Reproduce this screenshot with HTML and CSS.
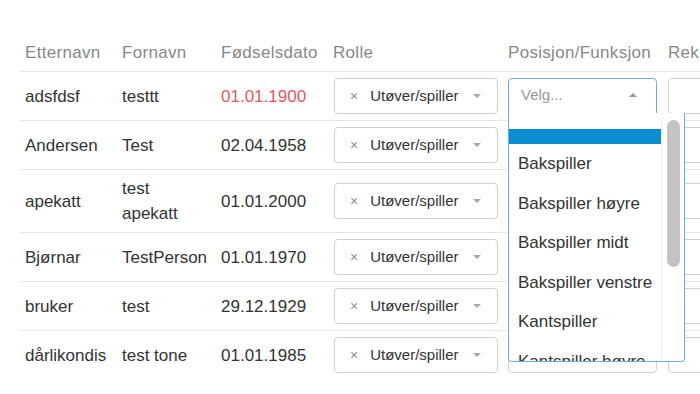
FILE: index.html
```html
<!DOCTYPE html>
<html lang="nb">

<head>
	<meta charset="UTF-8">
	<meta name="viewport" content="width=device-width, initial-scale=1.0">
	<title>Deltakere</title>
	<link rel="stylesheet" href="styles.css">
</head>

<body>
	<table class="roster">
		<colgroup>
			<col class="col-last">
			<col class="col-first">
			<col class="col-date">
			<col class="col-role">
			<col class="col-pos">
			<col class="col-rek">
		</colgroup>
		<thead>
			<tr>
				<th>Etternavn</th>
				<th>Fornavn</th>
				<th>Fødselsdato</th>
				<th>Rolle</th>
				<th>Posisjon/Funksjon</th>
				<th>Rek</th>
			</tr>
		</thead>
		<tbody>
			<tr>
				<td>adsfdsf</td>
				<td class="first">testtt</td>
				<td class="warn">01.01.1900</td>
				<td><div class="chosen role"><span class="clear">×</span><span class="value">Utøver/spiller</span><span class="caret"></span></div></td>
				<td>
					<div class="pos">
						<div class="chosen pos-box open"><span class="placeholder">Velg...</span><span class="caret up"></span></div>
						<div class="drop">
							<ul class="options">
								<li class="opt active"></li>
								<li class="opt">Bakspiller</li>
								<li class="opt">Bakspiller høyre</li>
								<li class="opt">Bakspiller midt</li>
								<li class="opt">Bakspiller venstre</li>
								<li class="opt">Kantspiller</li>
								<li class="opt">Kantspiller høyre</li>
							</ul>
							<div class="scroll"><div class="thumb"></div></div>
						</div>
					</div>
				</td>
				<td><div class="field"></div></td>
			</tr>
			<tr>
				<td>Andersen</td>
				<td class="first">Test</td>
				<td>02.04.1958</td>
				<td><div class="chosen role"><span class="clear">×</span><span class="value">Utøver/spiller</span><span class="caret"></span></div></td>
				<td><div class="chosen pos-box"><span class="caret"></span></div></td>
				<td><div class="field"></div></td>
			</tr>
			<tr>
				<td>apekatt</td>
				<td class="first">test apekatt</td>
				<td>01.01.2000</td>
				<td><div class="chosen role"><span class="clear">×</span><span class="value">Utøver/spiller</span><span class="caret"></span></div></td>
				<td><div class="chosen pos-box"><span class="caret"></span></div></td>
				<td><div class="field"></div></td>
			</tr>
			<tr>
				<td>Bjørnar</td>
				<td class="first">TestPerson</td>
				<td>01.01.1970</td>
				<td><div class="chosen role"><span class="clear">×</span><span class="value">Utøver/spiller</span><span class="caret"></span></div></td>
				<td><div class="chosen pos-box"><span class="caret"></span></div></td>
				<td><div class="field"></div></td>
			</tr>
			<tr>
				<td>bruker</td>
				<td class="first">test</td>
				<td>29.12.1929</td>
				<td><div class="chosen role"><span class="clear">×</span><span class="value">Utøver/spiller</span><span class="caret"></span></div></td>
				<td><div class="chosen pos-box"><span class="caret"></span></div></td>
				<td><div class="field"></div></td>
			</tr>
			<tr>
				<td>dårlikondis</td>
				<td class="first">test tone</td>
				<td>01.01.1985</td>
				<td><div class="chosen role"><span class="clear">×</span><span class="value">Utøver/spiller</span><span class="caret"></span></div></td>
				<td><div class="chosen pos-box"><span class="caret"></span></div></td>
				<td><div class="field"></div></td>
			</tr>
		</tbody>
	</table>
</body>

</html>
```

FILE: styles.css
```css
html,
body {
	margin: 0;
	background: #fff;
}

body {
	padding: 35px 0 0 20px;
	overflow: hidden;
	font-family: "Liberation Sans", Arial, sans-serif;
	font-size: 17px;
	color: #333;
}

.roster {
	width: 740px;
	table-layout: fixed;
	border-collapse: collapse;
}

.col-last { width: 97px; }
.col-first { width: 99px; }
.col-date { width: 112px; }
.col-role { width: 175px; }
.col-pos { width: 160px; }
.col-rek { width: 97px; }

.roster th {
	padding: 8px 5px;
	line-height: 20px;
	font-weight: normal;
	text-align: left;
	color: #888;
	letter-spacing: .3px;
	white-space: nowrap;
}

.roster td {
	border-top: 1px solid #e6e6e6;
	padding: 6px 5px 6px;
	line-height: 25px;
	vertical-align: middle;
	white-space: nowrap;
}

.roster td.first {
	white-space: normal;
	padding-right: 11px;
}

.warn {
	color: #e25a5e;
}

.chosen {
	display: flex;
	align-items: center;
	box-sizing: border-box;
	height: 36px;
	border: 1px solid #cfcfcf;
	border-radius: 4px;
	background: #fff;
	font-size: 15px;
	line-height: 20px;
}

.role {
	width: 164px;
	margin-left: 1px;
	padding: 0 16px 0 15px;
}

.clear {
	color: #8f8f8f;
	font-size: 14px;
	margin-right: 12px;
}

.value {
	color: #333;
}

.caret {
	margin-left: auto;
	width: 0;
	height: 0;
	border-left: 4px solid transparent;
	border-right: 4px solid transparent;
	border-top: 4px solid #aaa;
}

.caret.up {
	border-top: 0;
	border-bottom: 4px solid #999;
	margin-bottom: 3px;
}

.pos-box {
	width: 149px;
	padding: 0 19px 0 12px;
}

.placeholder {
	color: #999;
	margin-bottom: 3px;
}

.pos {
	position: relative;
}

.open {
	border-color: #6aaee6;
	border-radius: 4px 4px 0 0;
}

.drop {
	position: absolute;
	top: 35px;
	left: 0;
	z-index: 2;
	display: flex;
	box-sizing: border-box;
	width: 177px;
	height: 249px;
	border: 1px solid #6aaee6;
	border-top: 0;
	border-radius: 0 0 4px 4px;
	background: #fff;
	overflow: hidden;
}

.options {
	flex: 1;
	margin: 0;
	padding: 16px 0 0;
	list-style: none;
	overflow: hidden;
}

.opt {
	height: 39.5px;
	line-height: 39.5px;
	padding: 0 9px;
	font-size: 17px;
	color: #333;
}

.opt.active {
	height: 15px;
	background: #0d8ed2;
}

.scroll {
	width: 23px;
	box-sizing: border-box;
	border-left: 1px solid #eee;
	padding: 7px 4px 0 5px;
}

.thumb {
	height: 147px;
	border-radius: 7px;
	background: #c3c3c3;
}

.field {
	box-sizing: border-box;
	width: 80px;
	height: 36px;
	border: 1px solid #cfcfcf;
	border-radius: 4px;
}
```
